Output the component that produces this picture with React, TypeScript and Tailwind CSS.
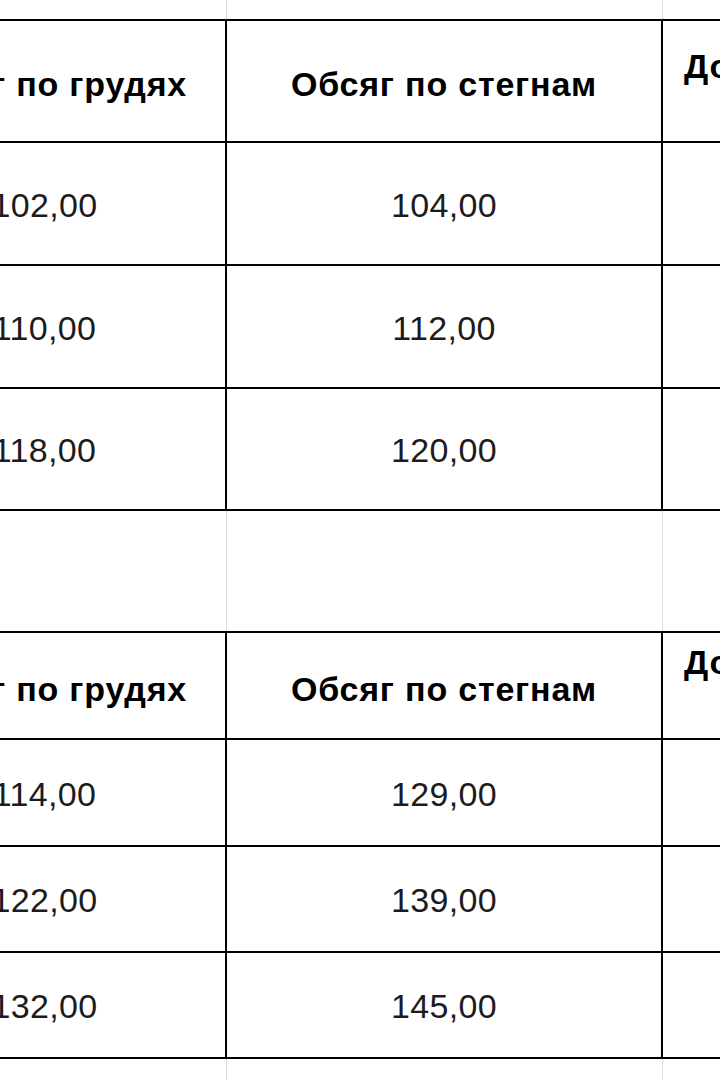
import React from "react";

const font = { fontFamily: '"Liberation Sans", Arial, sans-serif' };

function Spacer({ h }: { h: string }) {
  return (
    <div className={`grid grid-cols-[363px_436px_1fr] ${h}`}>
      <div className="border-r border-[#dcdcdc]" />
      <div className="border-r border-[#dcdcdc]" />
      <div />
    </div>
  );
}

function Table({
  rows,
  heights,
  thirdPad,
}: {
  rows: [string, string][];
  heights: string[];
  thirdPad: string;
}) {
  const head =
    "flex items-center justify-center whitespace-nowrap border-b-2 border-r-2 border-black pt-[7px] text-[34px] font-bold tracking-[0.8px] text-black";
  const cell =
    "flex items-center justify-center border-b-2 border-r-2 border-black pt-[3px] text-[34px] tracking-[0.3px] text-[#1c1c1c]";
  return (
    <div className="border-t-2 border-black">
      <div className={`grid grid-cols-[363px_436px_1fr] ${heights[0]}`}>
        <div className={head}>Обсяг по грудях</div>
        <div className={head}>Обсяг по стегнам</div>
        <div
          className={`flex flex-col overflow-hidden border-b-2 border-black text-[34px] font-bold leading-[38px] tracking-[0.8px] text-black ${thirdPad}`}
        >
          <span className="whitespace-nowrap pl-[21px]">Довжина</span>
          <span className="whitespace-nowrap pl-[90px]">виробу</span>
        </div>
      </div>
      {rows.map(([a, b], i) => (
        <div key={i} className={`grid grid-cols-[363px_436px_1fr] ${heights[i + 1]}`}>
          <div className={cell}>{a}</div>
          <div className={cell}>{b}</div>
          <div className="border-b-2 border-black" />
        </div>
      ))}
    </div>
  );
}

export default function App() {
  return (
    <div className="h-[1080px] w-[720px] overflow-hidden bg-white" style={font}>
      <div className="ml-[-136px] w-[1200px]">
        <Spacer h="h-[19px]" />
        <Table
          rows={[
            ["102,00", "104,00"],
            ["110,00", "112,00"],
            ["118,00", "120,00"],
          ]}
          heights={["h-[122px]", "h-[123px]", "h-[123px]", "h-[122px]"]}
          thirdPad="pt-[26px]"
        />
        <Spacer h="h-[120px]" />
        <Table
          rows={[
            ["114,00", "129,00"],
            ["122,00", "139,00"],
            ["132,00", "145,00"],
          ]}
          heights={["h-[107px]", "h-[107px]", "h-[106px]", "h-[106px]"]}
          thirdPad="pt-[10px]"
        />
        <Spacer h="h-[30px]" />
      </div>
    </div>
  );
}
